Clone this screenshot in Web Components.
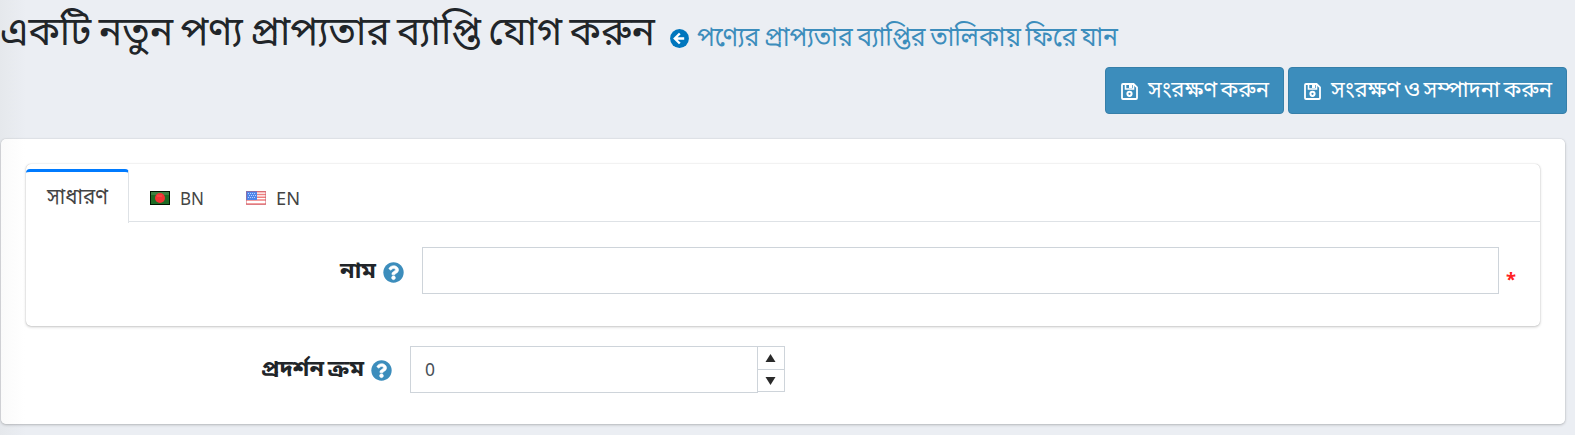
<!DOCTYPE html>
<html lang="bn"><head><meta charset="utf-8"><title>একটি নতুন পণ্য প্রাপ্যতার ব্যাপ্তি যোগ করুন</title>
<style>
body{margin:0;height:435px;overflow:hidden;background:linear-gradient(90deg,#e5e8ec,#ebeef3 26px);font-family:"Noto Sans","Noto Sans Bengali",sans-serif;color:#212529}
</style></head><body>
<availability-page></availability-page>
<script>
const define=(name,html,setup)=>customElements.define(name,class extends HTMLElement{
  constructor(){super();const t=document.createElement('template');t.innerHTML=html;
    this.attachShadow({mode:'open'}).append(t.content.cloneNode(true));}
  connectedCallback(){if(setup)setup(this,this.shadowRoot);}
});
// One line of text that takes exactly the width given in its w attribute.
define('fit-text',`<style>:host{display:block;flex:none;white-space:nowrap;height:var(--lh,30px);line-height:var(--lh,30px);word-spacing:var(--ws,-.07em)}
span{display:inline-block;transform-origin:0 50%}</style><span><slot></slot></span>`,(h,r)=>{
  const s=r.querySelector('span'),w=+h.getAttribute('w');h.style.width=w+'px';
  s.style.transform='scaleX('+w/s.getBoundingClientRect().width+')';
});
define('back-icon',`<style>:host{display:block;flex:none;width:19px;height:19px}svg{display:block}</style>
<svg width="19" height="19" viewBox="0 0 19 19"><circle cx="9.5" cy="9.5" r="9.4" fill="#0076bd"/><path d="M9.8 4.5 4.8 9.5l5 5M5.2 9.5h9" fill="none" stroke="#fff" stroke-width="2.4"/></svg>`);
define('help-icon',`<style>:host{display:block;flex:none;width:21px;height:21px}svg{display:block}</style>
<svg width="21" height="21" viewBox="0 0 512 512"><path fill="#3c8dbc" d="M504 256c0 136.997-111.043 248-248 248S8 392.997 8 256C8 119.083 119.043 8 256 8s248 111.083 248 248z"/><path fill="#fff" stroke="#fff" stroke-width="14" d="M262.655 90c-54.497 0-89.255 22.957-116.549 63.758-3.536 5.286-2.353 12.415 2.715 16.258l34.699 26.31c5.205 3.947 12.621 3.008 16.665-2.122 17.864-22.658 30.113-35.797 57.303-35.797 20.429 0 45.698 13.148 45.698 32.958 0 14.976-12.363 22.667-32.534 33.976C247.128 238.528 216 254.941 216 296v4c0 6.627 5.373 12 12 12h56c6.627 0 12-5.373 12-12v-1.333c0-28.462 83.186-29.647 83.186-106.667 0-58.002-60.165-102-116.531-102zM256 338c-25.365 0-46 20.635-46 46 0 25.364 20.635 46 46 46s46-20.636 46-46c0-25.365-20.635-46-46-46z"/></svg>`);
define('save-button',`<style>:host{display:flex;box-sizing:border-box;height:47px;border:1px solid #367fa9;border-radius:4px;background:#3c8dbc;color:#fff;padding:0 14px 0 15px;align-items:center;font-size:22.5px;--ws:-.1em}
svg{display:block;margin:2px 10px 0 0;flex:none}::slotted(*){margin-top:-3px}</style>
<svg width="17" height="17" viewBox="0 0 17 17" fill="none" stroke="#fff"><path stroke-width="1.8" d="M2 1h10.6L16 4.4V15q0 1-1 1H2q-1 0-1-1V2q0-1 1-1z"/><path stroke-width="1.6" d="M4.5 1v5h8V1"/><path fill="#fff" stroke="none" d="M8 1h3v4H8z"/><circle cx="8.5" cy="10.8" r="2.1" stroke-width="2"/></svg><slot></slot>`);
define('page-header',`<style>:host{display:block;height:139px}
.top{display:flex;height:67px}.top h1{margin:7px 0 0;font-size:40px;font-weight:400;--lh:46px}
back-icon{margin:29px 8px 0 15px}.link{margin-top:20px;font-size:27px;color:#3c8dbc;--lh:32px}
.actions{display:flex;justify-content:flex-end;gap:4px;padding-right:8px}</style>
<div class="top"><h1><fit-text w="655">একটি নতুন পণ্য প্রাপ্যতার ব্যাপ্তি যোগ করুন</fit-text></h1><back-icon></back-icon><fit-text class="link" w="421">পণ্যের প্রাপ্যতার ব্যাপ্তির তালিকায় ফিরে যান</fit-text></div>
<div class="actions"><save-button><fit-text w="121">সংরক্ষণ করুন</fit-text></save-button><save-button><fit-text w="221">সংরক্ষণ ও সম্পাদনা করুন</fit-text></save-button></div>`);
define('flag-icon',`<style>:host{display:block;width:20px;height:14px;flex:none}svg{display:none}:host([code=bn]) .bn,:host([code=us]) .us{display:block}</style>
<svg class="bn" width="20" height="14"><path fill="#001500" d="M0 0h20v14H0z"/><path fill="#1d6b24" d="M1 1h18v12H1z"/><path fill="#3d8040" d="M1 1h18v3H1z"/><circle cx="10" cy="7" r="5" fill="#f03333"/><path d="M7 5h5" stroke="#ff5550"/></svg>
<svg class="us" width="20" height="14"><path fill="#fff" d="M0 0h20v14H0z"/><path stroke="#f08080" stroke-width="1.5" d="M0 .7h20M0 3.5h20M0 6.3h20M0 9.1h20M0 12.9h20"/><path fill="#4f85ea" d="M0 0h11v9H0z"/><path stroke="#b9d0ff" stroke-dasharray="1 1" d="M2 2.5h8M3 4.5h7M2 6.5h8"/><path fill="none" stroke="#c45a67" stroke-opacity=".5" d="M.5.5h19v13H.5z"/></svg>`);
define('tab-bar',`<style>:host{display:flex;height:58px;box-sizing:border-box;border-bottom:1px solid #dee2e6;color:#444;font-size:18px}
.active{box-sizing:border-box;width:103px;height:54px;margin-top:5px;background:#fff;border-top:3px solid #007bff;border-right:1px solid #dee2e6;border-radius:4px 4px 0 0;padding:8px 0 0 21px;font-size:22px}
.lang{display:flex;padding-top:27px;margin-left:21px}.lang+.lang{margin-left:42px}.lang fit-text{margin:-8px 0 0 10px}</style>
<div class="active"><fit-text w="61">সাধারণ</fit-text></div>
<div class="lang"><flag-icon code="bn"></flag-icon><fit-text w="24">BN</fit-text></div>
<div class="lang"><flag-icon code="us"></flag-icon><fit-text w="24">EN</fit-text></div>`);
define('form-label',`<style>:host{display:flex;justify-content:flex-end;box-sizing:border-box;font-weight:700;font-size:21.5px;--ws:-.1em}help-icon{margin:14px 0 0 7px}::slotted(*){margin-top:7px}</style><slot></slot><help-icon></help-icon>`);
define('text-field',`<style>:host{display:block;box-sizing:border-box;height:47px;border:1px solid #ced4da;background:#fff}</style><slot></slot>`);
define('number-field',`<style>:host{display:flex}text-field{width:348px;padding:7px 0 0 14px;font-size:18px;color:#495057}
.spin{box-sizing:border-box;width:27px;height:46px;border:1px solid #ced4da;border-left:0;display:grid;grid-template-rows:22px 22px}
.spin div{display:grid;place-items:center start;padding-left:7px}.spin div+div{border-top:1px solid #ced4da}svg{display:block}</style>
<text-field><fit-text w="10"><slot></slot></fit-text></text-field>
<div class="spin"><div><svg width="11" height="8"><path fill="#2a2a2a" d="M5.5 0 10.5 8H.5z"/></svg></div><div><svg width="11" height="8"><path fill="#2a2a2a" d="M.5 0h10l-5 8z"/></svg></div></div>`);
define('card-box',`<style>:host{display:block;box-sizing:border-box;background:#fff;border-radius:5px;box-shadow:0 0 1px rgba(0,0,0,.25),0 1px 3px rgba(0,0,0,.22)}</style><slot></slot>`);
define('availability-page',`<style>:host{display:block}
.outer{margin:0 10px 0 1px;height:285px;padding:25px 25px 0;background:linear-gradient(90deg,#fafafa,#fff 24px)}
.inner{height:162px}.row{display:flex}.name{padding-top:25px}.name form-label{width:378px;margin-right:18px;padding-top:1px}.name text-field{width:1077px}
.star{color:#f22;font-weight:700;font-size:17px;margin:18px 0 0 7px}.order{padding-top:20px}.order form-label{width:366px;margin-right:18px}</style>
<page-header></page-header><card-box class="outer"><card-box class="inner"><tab-bar></tab-bar>
<div class="row name"><form-label><fit-text w="36">নাম</fit-text></form-label><text-field></text-field><fit-text class="star" w="10">*</fit-text></div></card-box>
<div class="row order"><form-label><fit-text w="103">প্রদর্শন ক্রম</fit-text></form-label><number-field>0</number-field></div></card-box>`);
</script></body></html>
